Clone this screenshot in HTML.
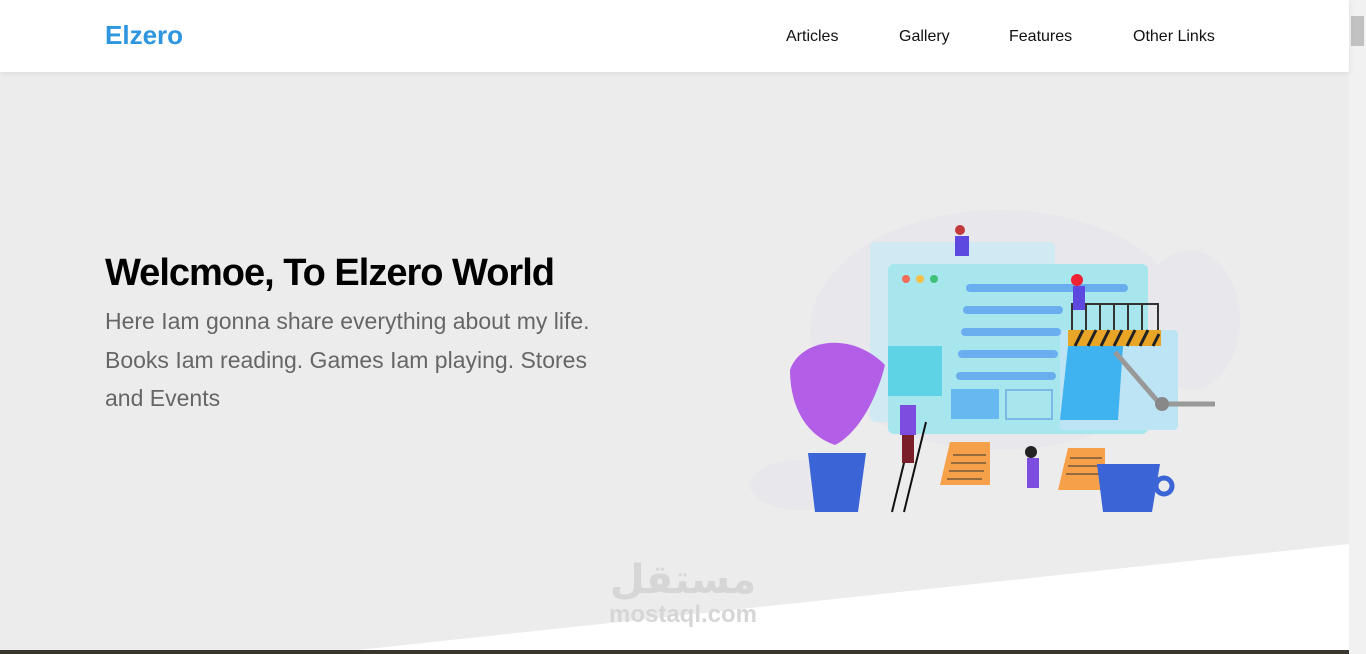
<!DOCTYPE html>
<html><head><meta charset="utf-8"><style>
*{margin:0;padding:0;box-sizing:border-box}
body{width:1366px;height:654px;overflow:hidden;background:#ececec;font-family:"Liberation Sans",Arial,sans-serif;position:relative}
.hdr{position:absolute;left:0;top:0;width:1349px;height:72px;background:#fff;box-shadow:0 1px 6px rgba(0,0,0,.08);z-index:2}
.logo{position:absolute;left:105px;top:20px;font-size:26px;font-weight:bold;color:#2e95df}
.nav{position:absolute;top:28px;font-size:16px;color:#111}
h1{position:absolute;left:105px;top:252px;font-size:38px;font-weight:bold;letter-spacing:-1px;color:#000}
p{position:absolute;left:105px;top:302px;width:510px;font-size:23px;line-height:38.6px;color:#666}
.sb{position:absolute;right:0;top:0;width:17px;height:654px;background:#f1f1f1}
.thumb{position:absolute;right:2px;top:16px;width:13px;height:30px;background:#c1c1c1}
.bot{position:absolute;left:0;bottom:0;width:1349px;height:4px;background:#3b3530}
.wm{position:absolute;left:600px;top:558px;width:166px;color:#d6d6d6;text-align:center;font-weight:bold}
</style></head><body>
<div class="hdr"><div class="logo">Elzero</div>
<div class="nav" style="left:786px">Articles</div>
<div class="nav" style="left:899px">Gallery</div>
<div class="nav" style="left:1009px">Features</div>
<div class="nav" style="left:1133px">Other Links</div></div>
<h1>Welcmoe, To Elzero World</h1>
<p>Here Iam gonna share everything about my life. Books Iam reading. Games Iam playing. Stores and Events</p>
<svg style="position:absolute;left:0;top:0" width="1349" height="654">
<polygon points="320,654 1349,544 1349,654" fill="#fff"/>
<g opacity=".45"><ellipse cx="1000" cy="330" rx="190" ry="120" fill="#e2e2ee"/><ellipse cx="1190" cy="320" rx="50" ry="70" fill="#e2e2ee"/><ellipse cx="800" cy="485" rx="50" ry="25" fill="#e2e2ee"/></g>
<rect x="870" y="242" width="185" height="180" rx="6" fill="#cfeaf3"/>
<rect x="888" y="264" width="260" height="170" rx="6" fill="#a8e6ee"/>
<rect x="1060" y="330" width="118" height="100" rx="4" fill="#bde4f4"/>
<circle cx="906" cy="279" r="4" fill="#f26b5b"/><circle cx="920" cy="279" r="4" fill="#f6c143"/><circle cx="934" cy="279" r="4" fill="#40c17a"/>
<g fill="#6aaef0"><rect x="966" y="284" width="162" height="8" rx="4"/><rect x="963" y="306" width="100" height="8" rx="4"/><rect x="961" y="328" width="100" height="8" rx="4"/><rect x="958" y="350" width="100" height="8" rx="4"/><rect x="956" y="372" width="100" height="8" rx="4"/></g>
<rect x="888" y="346" width="54" height="50" fill="#5fd3e6"/><rect x="951" y="389" width="48" height="30" fill="#67b8f0"/><rect x="1006" y="390" width="46" height="29" fill="none" stroke="#7bb8e6" stroke-width="2"/>
<polygon points="1068,346 1123,346 1118,420 1060,420" fill="#3fb2f0"/>
<rect x="1068" y="330" width="93" height="16" fill="#e9a526"/>
<g stroke="#222" stroke-width="3"><path d="M1075 346l8-16M1088 346l8-16M1101 346l8-16M1114 346l8-16M1127 346l8-16M1140 346l8-16M1153 346l6-12"/></g>
<path d="M1072 330v-26h86v26M1086 304v26M1100 304v26M1114 304v26M1128 304v26M1142 304v26" stroke="#333" fill="none" stroke-width="2"/>
<path d="M1115 352l45 52h55" stroke="#999" stroke-width="5" fill="none"/><circle cx="1162" cy="404" r="7" fill="#888"/>
<path d="M790 370c10-30 60-40 95-5c-10 40-30 70-50 80c-30-10-45-40-45-75z" fill="#b25ee6"/>
<polygon points="808,453 866,453 858,512 815,512" fill="#3b64d6"/>
<path d="M892 512l22-90M904 512l22-90" stroke="#111" stroke-width="2"/>
<rect x="900" y="405" width="16" height="30" fill="#7d4de0"/><rect x="902" y="435" width="12" height="28" fill="#7a1f2a"/>
<polygon points="950,442 990,442 990,485 940,485" fill="#f6a04a"/>
<polygon points="1068,448 1105,448 1105,490 1058,490" fill="#f6a04a"/>
<g stroke="#333" stroke-width="1"><path d="M953 455h33M951 463h35M949 471h35M947 479h35M1070 458h32M1068 466h33M1066 474h33"/></g>
<circle cx="1031" cy="452" r="6" fill="#222"/><rect x="1027" y="458" width="12" height="30" fill="#7d4de0"/>
<circle cx="960" cy="230" r="5" fill="#c23a3a"/><rect x="955" y="236" width="14" height="20" fill="#5d49e0"/>
<circle cx="1077" cy="280" r="6" fill="#e23"/><rect x="1073" y="286" width="12" height="24" fill="#5d49e0"/>
<polygon points="1097,464 1160,464 1152,512 1103,512" fill="#3b64d6"/><circle cx="1164" cy="486" r="8" fill="none" stroke="#3b64d6" stroke-width="5"/>
</svg>
<div class="wm"><div style="font-size:40px;line-height:44px;font-family:'DejaVu Sans',sans-serif">مستقل</div><div style="font-size:24px;line-height:26px">mostaql.com</div></div>
<div class="bot"></div>
<div class="sb"><div class="thumb"></div></div>
</body></html>
